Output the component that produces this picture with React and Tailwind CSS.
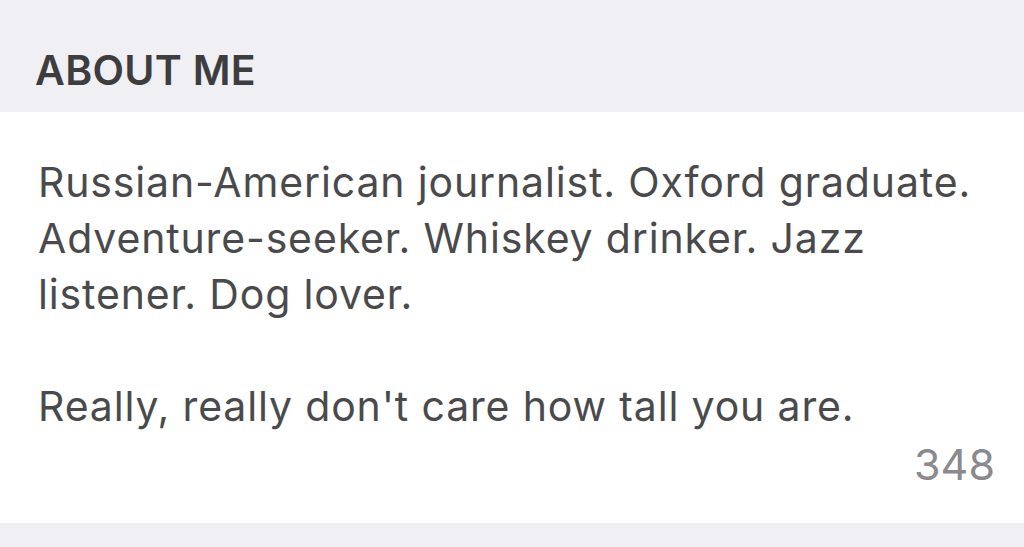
export default function App() {
  const font = { fontFamily: "Inter, 'Open Sans', sans-serif" };
  return (
    <div className="h-[547px] w-[1024px] overflow-hidden bg-[#efeff4]" style={font}>
      {/* Section header */}
      <div className="flex h-[112px] items-end px-[35px] pb-[21px]">
        <h2 className="text-[41px] font-semibold leading-none tracking-[0.3px] text-[#3d3d3f]">ABOUT ME</h2>
      </div>

      {/* Bio */}
      <div className="h-[411px] bg-white pl-[38px] pr-[29px] pt-[42px]">
        <p className="whitespace-nowrap text-[41px] leading-[56px] tracking-[0.85px] text-[#4a4a4c]">
          Russian-American journalist. Oxford graduate.
          <br />
          Adventure-seeker. Whiskey drinker. Jazz
          <br />
          listener. Dog lover.
          <br />
          <br />
          Really, really don't care how tall you are.
        </p>
        <div className="mt-[2px] text-right text-[43px] leading-[56px] text-[#8a8a8e]">348</div>
      </div>
    </div>
  );
}
